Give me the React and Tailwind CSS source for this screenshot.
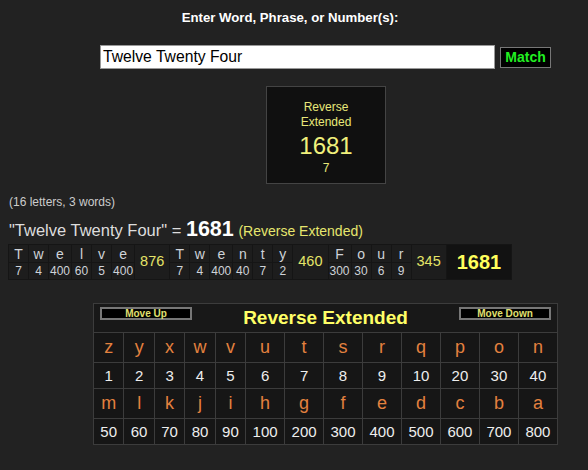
import React from 'react';

const words = [
  { letters: [['T', 7], ['w', 4], ['e', 400], ['l', 60], ['v', 5], ['e', 400]], total: 876 },
  { letters: [['T', 7], ['w', 4], ['e', 400], ['n', 40], ['t', 7], ['y', 2]], total: 460 },
  { letters: [['F', 300], ['o', 30], ['u', 6], ['r', 9]], total: 345 },
];

const cipherRows = [
  { letters: ['z', 'y', 'x', 'w', 'v', 'u', 't', 's', 'r', 'q', 'p', 'o', 'n'], values: [1, 2, 3, 4, 5, 6, 7, 8, 9, 10, 20, 30, 40] },
  { letters: ['m', 'l', 'k', 'j', 'i', 'h', 'g', 'f', 'e', 'd', 'c', 'b', 'a'], values: [50, 60, 70, 80, 90, 100, 200, 300, 400, 500, 600, 700, 800] },
];

function SmallButton({ children }) {
  return (
    <button className="w-[92px] h-[13px] bg-black border-2 border-[#777] text-[10px] leading-[9px] font-bold text-[#e0e070]">
      {children}
    </button>
  );
}

export default function App() {
  return (
    <div className="min-h-[470px] bg-[#222222] font-['Liberation_Sans',Arial,sans-serif] overflow-hidden">
      {/* Header + input */}
      <h1 className="pt-[10px] pr-[8px] text-center text-[13.2px] leading-[16px] font-bold text-white">
        Enter Word, Phrase, or Number(s):
      </h1>

      <div className="mt-[19px] ml-[100px] flex items-center gap-[5px]">
        <input
          readOnly
          value="Twelve Twenty Four"
          className="w-[395px] h-[24px] bg-white border border-[#999] px-[2px] text-[15.7px] text-black outline-none"
        />
        <button className="w-[51px] h-[21px] bg-black border border-[#777] text-[14px] font-bold text-[#22ee22] leading-none">
          Match
        </button>
      </div>

      {/* Result box */}
      <div className="mt-[17px] ml-[266px] w-[120px] h-[98px] bg-[#101010] border border-[#444] text-center text-[#e8e87a] pt-[13px]">
        <div className="text-[12px] leading-[15px]">Reverse</div>
        <div className="text-[12px] leading-[15px]">Extended</div>
        <div className="text-[24px] leading-[30px] mt-[1px] text-[#f0f07c]">1681</div>
        <div className="text-[12px] leading-[15px]">7</div>
      </div>

      {/* Summary */}
      <div className="pl-[9px]">
        <p className="mt-[11px] text-[12px] leading-[14px] text-[#cccccc]">(16 letters, 3 words)</p>
        <p className="mt-[9px] leading-[23px] text-[16.5px] text-[#dddddd]">
          "Twelve Twenty Four" = <span className="text-[21.5px] font-bold text-white">1681</span>{' '}
          <span className="text-[14px] text-[#e6e66e]">(Reverse Extended)</span>
        </p>

        <table className="mt-[1px] border-separate border-spacing-[1px] bg-[#151515] -ml-[1px]">
          <tbody>
            <tr>
              {words.map((w, wi) => (
                <React.Fragment key={wi}>
                  {w.letters.map(([l], i) => (
                    <td key={i} className="min-w-[19px] px-[1px] h-[17px] text-center text-[14px] leading-[16px] text-[#cfd3d8] bg-[#1d1d1d]">
                      {l}
                    </td>
                  ))}
                  <td rowSpan={2} className="px-[5px] text-center text-[14.5px] text-[#e4e468] bg-[#1d1d1d]">
                    {w.total}
                  </td>
                </React.Fragment>
              ))}
              <td rowSpan={2} className="px-[10px] text-center text-[20px] font-bold text-[#ffff5c] bg-[#121212]">
                1681
              </td>
            </tr>
            <tr>
              {words.map((w, wi) => (
                <React.Fragment key={wi}>
                  {w.letters.map(([, v], i) => (
                    <td key={i} className="min-w-[19px] px-[1px] h-[16px] text-center text-[12px] leading-[15px] text-[#cfd3d8] bg-[#1d1d1d]">
                      {v}
                    </td>
                  ))}
                </React.Fragment>
              ))}
            </tr>
          </tbody>
        </table>
      </div>

      {/* Cipher chart */}
      <table className="mt-[23px] ml-[93px] w-[465px] border-collapse border border-[#3c3c3c] bg-[#161616]">
        <tbody>
          <tr>
            <td colSpan={13} className="h-[29px] p-0 border border-[#3c3c3c] bg-[#181818] align-top">
              <div className="grid grid-cols-[92px_1fr_92px] items-start px-[6px] pt-[3px]">
                <SmallButton>Move Up</SmallButton>
                <div className="text-center text-[19px] leading-[22px] font-bold text-[#ffff66]">
                  Reverse Extended
                </div>
                <SmallButton>Move Down</SmallButton>
              </div>
            </td>
          </tr>
          {cipherRows.map((row, ri) => (
            <React.Fragment key={ri}>
              <tr>
                {row.letters.map((l) => (
                  <td key={l} className="px-[6px] py-0 h-[29px] border border-[#3c3c3c] text-center text-[18px] leading-[29px] text-[#e3813f]">
                    {l}
                  </td>
                ))}
              </tr>
              <tr>
                {row.values.map((v) => (
                  <td key={v} className="px-[6px] py-0 h-[25px] border border-[#3c3c3c] text-center text-[15px] leading-[25px] text-[#eeeeee]">
                    {v}
                  </td>
                ))}
              </tr>
            </React.Fragment>
          ))}
        </tbody>
      </table>
    </div>
  );
}
